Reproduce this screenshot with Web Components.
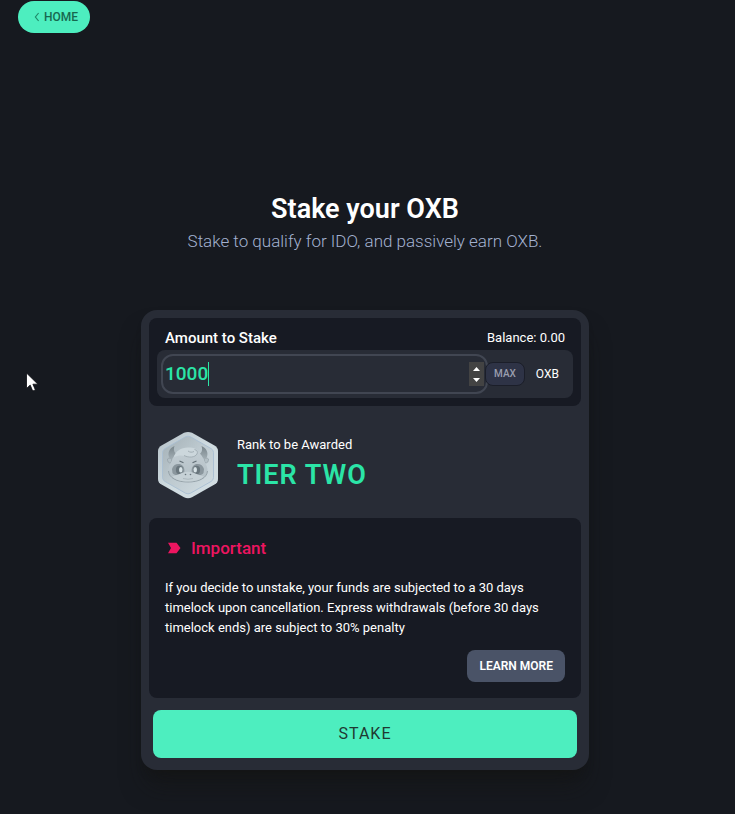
<!DOCTYPE html>
<html lang="en">
<head>
<meta charset="utf-8">
<meta name="viewport" content="width=device-width, initial-scale=1">
<title>Stake your OXB</title>
<style>
  body {
    margin: 0;
    min-height: 100vh;
    background-color: #16191f;
    color: #fff;
    font-family: Roboto, "Open Sans", sans-serif;
    font-size: 14px;
    line-height: 20px;
    --panel: #171a23;
    --card: #282c36;
    --mint: #4deebf;
    --green: #2be5a7;
    --pink: #ed1560;
  }
</style>
</head>
<body>
<stake-page>
  <home-link slot="nav" href="#">HOME</home-link>
  <page-title slot="title">
    Stake your OXB
    <span slot="subtitle">Stake to qualify for IDO, and passively earn OXB.</span>
  </page-title>
  <stake-card>
    <amount-field value="1000" balance="0.00" token="OXB"></amount-field>
    <rank-row rank="TIER TWO">Rank to be Awarded</rank-row>
    <info-panel heading="Important">
      If you decide to unstake, your funds are subjected to a 30 days timelock upon cancellation. Express withdrawals (before 30 days timelock ends) are subject to 30% penalty
    </info-panel>
    <stake-button slot="action">STAKE</stake-button>
  </stake-card>
</stake-page>
<mouse-pointer></mouse-pointer>

<script>
/* small base so every element can just hand over its markup */
class BaseElement extends HTMLElement {
  constructor() {
    super();
    this.attachShadow({ mode: "open" });
  }
  connectedCallback() {
    this.shadowRoot.innerHTML = this.render();
  }
}

class StakePage extends BaseElement {
  render() {
    return `
    <style>
      :host { display: block; padding: 1px 5px 44px 0; }
      nav { padding-left: 18px; display: flex; }
      main {
        display: flex;
        flex-direction: column;
        align-items: center;
        gap: 57px;
        padding: 160px 16px 0;
      }
    </style>
    <nav><slot name="nav"></slot></nav>
    <main>
      <slot name="title"></slot>
      <slot></slot>
    </main>
    `;
  }
}

class HomeLink extends BaseElement {
  render() {
    return `
    <style>
      :host { display: block; }
      a {
        display: flex;
        align-items: center;
        gap: 4px;
        height: 32px;
        padding: 0 12px 0 16px;
        border-radius: 16px;
        background-color: var(--mint);
        color: #17684f;
        font-size: 12px;
        font-weight: 500;
        text-decoration: none;
      }
      svg { display: block; }
    </style>
    <a href="${this.getAttribute("href")}">
      <svg width="6" height="10" viewBox="0 0 6 10" fill="none" stroke="#1f8a69" stroke-width="1.2"><path d="M4.6 1 1.4 5l3.2 4"/></svg>
      <slot></slot>
    </a>
    `;
  }
}

class PageTitle extends BaseElement {
  render() {
    return `
    <style>
      :host { display: block; text-align: center; }
      h1 { margin: 0; font-size: 27px; line-height: 32px; font-weight: 600; }
      p { margin: 4px 0 0; font-size: 17px; line-height: 24px; font-weight: 300; color: #a3b1d0; }
    </style>
    <h1><slot></slot></h1>
    <p><slot name="subtitle"></slot></p>
    `;
  }
}

class StakeCard extends BaseElement {
  render() {
    return `
    <style>
      :host {
        display: block;
        box-sizing: border-box;
        width: 100%;
        max-width: 448px;
        padding: 8px;
        border-radius: 16px;
        background-color: var(--card);
        box-shadow: 0 20px 25px -5px rgba(20, 20, 18, 0.5), 0 8px 10px -6px rgba(20, 20, 18, 0.5);
      }
      .action { padding: 12px 4px 4px; }
    </style>
    <slot></slot>
    <div class="action"><slot name="action"></slot></div>
    `;
  }
}

class AmountField extends BaseElement {
  render() {
    return `
    <style>
      :host {
        display: block;
        padding: 10px 8px 8px;
        border-radius: 8px;
        background-color: var(--panel);
      }
      .top { display: flex; justify-content: space-between; padding: 0 8px 2px; }
      label { font-size: 15px; font-weight: 500; }
      .balance { font-size: 13px; }
      .row {
        display: flex;
        align-items: center;
        padding: 4px 14px 4px 4px;
        border-radius: 8px;
        background-color: var(--card);
      }
      .box {
        flex: 1;
        display: flex;
        align-items: center;
        box-sizing: border-box;
        min-width: 0;
        height: 40px;
        padding: 0 2px;
        border: 2px solid #414652;
        border-radius: 12px;
      }
      input {
        field-sizing: content;
        min-width: 8px;
        padding: 0;
        border: 0;
        outline: 0;
        background: none;
        color: var(--green);
        caret-color: transparent;
        font: 500 19px/24px Roboto, sans-serif;
      }
      .caret { width: 1px; height: 24px; background-color: var(--green); }
      .spin {
        margin-left: auto;
        display: flex;
        flex-direction: column;
        background-color: #434343;
      }
      .spin button { display: block; width: 15px; height: 12px; padding: 0; border: 0; background: none; }
      svg { display: block; }
      .max {
        box-sizing: border-box;
        height: 24px;
        margin: 0 11px 0 -3px;
        padding: 0 8px;
        border: 1px solid #1b1e29;
        border-radius: 8px;
        background-color: #2e3346;
        color: #9a9eae;
        font: 500 10px/20px Roboto, sans-serif;
        z-index: 1;
      }
      .token { font-size: 12px; }
    </style>
    <div class="top">
      <label for="amount">Amount to Stake</label>
      <span class="balance">Balance: ${this.getAttribute("balance")}</span>
    </div>
    <div class="row">
      <div class="box">
        <input id="amount" type="text" inputmode="numeric" value="${this.getAttribute("value")}">
        <span class="caret"></span>
        <div class="spin">
          <button type="button" aria-label="Increase"><svg width="15" height="12" viewBox="0 0 15 12"><path d="M4 9l3.500-4L11 9z" fill="#fff"/></svg></button>
          <button type="button" aria-label="Decrease"><svg width="15" height="12" viewBox="0 0 15 12"><path d="M4 4l3.500 4L11 4z" fill="#fff"/></svg></button>
        </div>
      </div>
      <button class="max" type="button">MAX</button>
      <span class="token">${this.getAttribute("token")}</span>
    </div>
    `;
  }
  connectedCallback() {
    super.connectedCallback();
    const input = this.shadowRoot.querySelector("input");
    const [up, down] = this.shadowRoot.querySelectorAll(".spin button");
    up.addEventListener("click", () => { input.value = Number(input.value) + 1; });
    down.addEventListener("click", () => { input.value = Math.max(0, Number(input.value) - 1); });
    this.shadowRoot.querySelector(".max").addEventListener("click", () => {
      input.value = this.getAttribute("balance");
    });
  }
}

class RankBadge extends BaseElement {
  render() {
    return `
    <style>
      :host { display: block; }
      svg { display: block; }
    </style>
    <svg width="62" height="68" viewBox="0 0 62 68">
      <defs>
        <linearGradient id="rim" x1="0" y1="0" x2="1" y2="1">
          <stop offset="0" stop-color="#b5c1c8"/>
          <stop offset=".5" stop-color="#cfdbe0"/>
          <stop offset="1" stop-color="#d3dee3"/>
        </linearGradient>
        <linearGradient id="face" x1="0" y1="0" x2="1" y2="1">
          <stop offset="0" stop-color="#a3b0b6"/>
          <stop offset=".5" stop-color="#bfcbd1"/>
          <stop offset="1" stop-color="#d3dee3"/>
        </linearGradient>
        <linearGradient id="head" x1="0" y1="0" x2="0" y2="1">
          <stop offset="0" stop-color="#c3ced4"/>
          <stop offset="1" stop-color="#b3bfc5"/>
        </linearGradient>
        <linearGradient id="horn" x1="0" y1="0" x2="0" y2="1">
          <stop offset="0" stop-color="#78848a"/>
          <stop offset="1" stop-color="#a2aeb4"/>
        </linearGradient>
      </defs>
      <path d="M27 1.800Q31 0 35 1.800L57.500 14.500Q61 16.500 61 20V48Q61 51.500 57.500 53.500L35 66.200Q31 68.200 27 66.200L4.500 53.500Q1 51.500 1 48V20Q1 16.500 4.500 14.500Z" fill="url(#rim)"/>
      <path d="M28.500 5.800Q31 4.500 33.500 5.800L54 17.500Q56.500 19 56.500 21.500V46.500Q56.500 49 54 50.500L33.500 62.200Q31 63.500 28.500 62.200L8 50.500Q5.500 49 5.500 46.500V21.500Q5.500 19 8 17.500Z" fill="url(#face)" stroke="#a9bed3" stroke-width=".9"/>
      <path d="M17.500 15c-5 2-7.500 7-5 12l4 1 5-4c-4-1-5.500-5-4-9z" fill="url(#horn)"/>
      <path d="M44.500 15c5 2 7.500 7 5 12l-4 1-5-4c4-1 5.500-5 4-9z" fill="url(#horn)"/>
      <path d="M15 28c-2-1-4-1-4.500 0 0 3 1 4 3.500 4zM47 28c2-1 4-1 4.500 0 0 3-1 4-3.500 4z" fill="#b3bfc5" stroke="#8d999f" stroke-width=".6"/>
      <path d="M31 17.500c-8 0-14 5-16 12-2 4-4 7-3.500 11C12 47 20 51 31 51s19-4 19.500-10.500c.5-4-1.500-7-3.500-11-2-7-8-12-16-12z" fill="url(#head)"/>
      <path d="M11.500 40C12 47 20 51 31 51s19-4 19.500-11" fill="none" stroke="#8b989f" stroke-width=".8"/>
      <path d="M17 26c1-6 8-10 15-9.500 6-.5 10 3 8 6.500-2 4-9 4-12 2-4-1-8-.5-11 1z" fill="#ccd7dc"/>
      <path d="M27 24.500c5 2.500 11 2 13-1.500 1-2 0-4-2.500-4.500M31 20c2 1.500 4 1.500 6 .5" fill="none" stroke="#98a5ab" stroke-width=".8"/>
      <path d="M22.500 30l4 1.800M39.500 30l-4 1.800" stroke="#626f76" stroke-width="1.200"/>
      <path d="M15 38c1-4 5-6 9-4.500 3 1.500 4 5 3 9-3 3-10 2.500-11.500-.5zM47 38c-1-4-5-6-9-4.500-3 1.500-4 5-3 9 3 3 10 2.500 11.500-.5z" fill="#8a969d"/>
      <ellipse cx="22.500" cy="39" rx="3.600" ry="4.200" fill="#69767d"/>
      <ellipse cx="39.500" cy="39" rx="3.600" ry="4.200" fill="#69767d"/>
      <ellipse cx="23.800" cy="38.800" rx="1.800" ry="2.800" fill="#d8e3e7"/>
      <ellipse cx="38.200" cy="38.800" rx="1.800" ry="2.800" fill="#d8e3e7"/>
      <path d="M15 45.500c5-1 8-3 11-4 3-1 7-1 10 0s6 3 11 4c-3 3-9 5-16 5s-13-2-16-5z" fill="#c6d1d6"/>
      <circle cx="28.500" cy="43.500" r=".8" fill="#69767d"/>
      <circle cx="33.500" cy="43.500" r=".8" fill="#69767d"/>
      <path d="M26 47.500q5 1.500 10 0" fill="none" stroke="#a0acb2" stroke-width=".7"/>
    </svg>
    `;
  }
}

class RankRow extends BaseElement {
  render() {
    return `
    <style>
      :host {
        display: flex;
        align-items: center;
        gap: 18px;
        box-sizing: border-box;
        height: 112px;
        padding: 5px 0 0 8px;
      }
      .label { font-size: 13px; }
      .rank { font-size: 27px; line-height: 40px; font-weight: 600; letter-spacing: 1px; color: var(--green); }
    </style>
    <rank-badge></rank-badge>
    <div>
      <div class="label"><slot></slot></div>
      <div class="rank">${this.getAttribute("rank")}</div>
    </div>
    `;
  }
}

class InfoPanel extends BaseElement {
  render() {
    return `
    <style>
      :host {
        display: block;
        padding: 16px;
        border-radius: 8px;
        background-color: var(--panel);
      }
      h2 {
        display: flex;
        align-items: center;
        gap: 10px;
        margin: 0 0 16px;
        padding: 2px 0 2px 2px;
        font-size: 17px;
        line-height: 24px;
        font-weight: 500;
        color: var(--pink);
      }
      p { margin: 0 0 12px; font-size: 13px; line-height: 20px; }
      .actions { display: flex; justify-content: flex-end; }
      button {
        height: 32px;
        padding: 0 12px;
        border: 0;
        border-radius: 8px;
        background-color: #4a5367;
        color: #fff;
        font: 600 12px/20px Roboto, sans-serif;
      }
    </style>
    <h2>
      <svg width="14" height="12" viewBox="0 0 14 12"><path d="M1 .8h8.500L13.500 6l-4 5.200H1L4 6z" fill="#ed1560"/></svg>
      ${this.getAttribute("heading")}
    </h2>
    <p><slot></slot></p>
    <div class="actions"><button type="button">LEARN MORE</button></div>
    `;
  }
}

class StakeButton extends BaseElement {
  render() {
    return `
    <style>
      :host { display: block; }
      button {
        display: block;
        width: 100%;
        height: 48px;
        border: 0;
        border-radius: 8px;
        background-color: var(--mint);
        color: #1f3932;
        font: 400 16px/24px Roboto, sans-serif;
        letter-spacing: 1px;
      }
    </style>
    <button type="button"><slot></slot></button>
    `;
  }
}

class MousePointer extends BaseElement {
  render() {
    return `
    <style>
      :host { position: absolute; left: 26px; top: 372px; pointer-events: none; }
      svg { display: block; }
    </style>
    <svg width="13" height="20" viewBox="0 0 13 20"><path d="M.5 1v15.500l3.700-3.400 2.500 5.900 2.700-1.100-2.500-5.700h5z" fill="#fff" stroke="#0b0d12" stroke-width=".8"/></svg>
    `;
  }
}

customElements.define("stake-page", StakePage);
customElements.define("home-link", HomeLink);
customElements.define("page-title", PageTitle);
customElements.define("stake-card", StakeCard);
customElements.define("amount-field", AmountField);
customElements.define("rank-badge", RankBadge);
customElements.define("rank-row", RankRow);
customElements.define("info-panel", InfoPanel);
customElements.define("stake-button", StakeButton);
customElements.define("mouse-pointer", MousePointer);
</script>
</body>
</html>
